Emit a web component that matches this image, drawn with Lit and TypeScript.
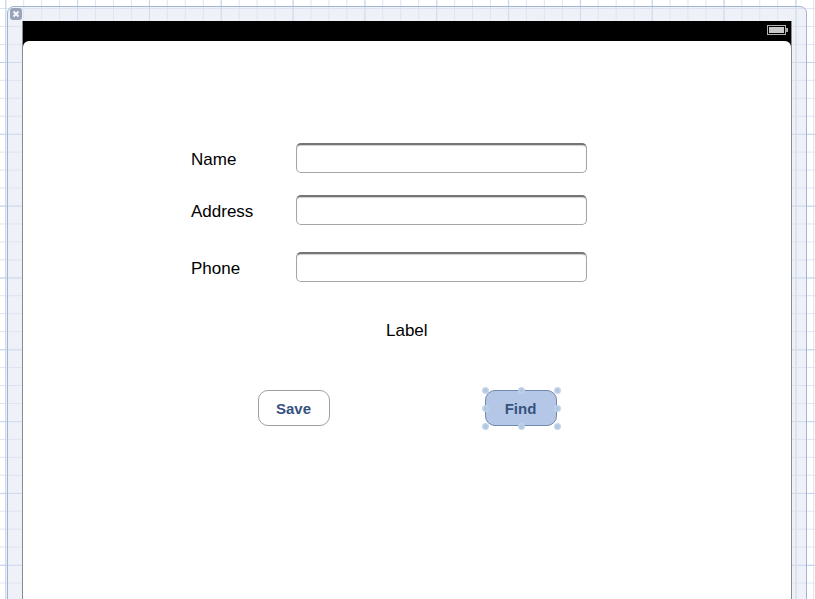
import { LitElement, html, css } from "lit";
import { customElement } from "lit/decorators.js";

@customElement("app-root")
export class AppRoot extends LitElement {
  static styles = css`
    :host {
      display: block;
      width: 815px;
      height: 599px;
      overflow: hidden;
      font-family: "Liberation Sans", Arial, sans-serif;
      background-color: #fff;
      background-image:
        linear-gradient(#c6d4ea 1px, transparent 1px),
        linear-gradient(90deg, #c6d4ea 1px, transparent 1px),
        linear-gradient(#dde5f2 1px, transparent 1px),
        linear-gradient(90deg, #dde5f2 1px, transparent 1px);
      background-size: 71.85px 71.85px, 71.85px 71.85px, 17.96px 17.96px, 17.96px 17.96px;
      background-position: 0 62px, 5.25px 0, 0 8px, 5.25px 0;
    }
    .frame {
      position: relative;
      box-sizing: border-box;
      width: 800px;
      height: 640px;
      margin: 6px 0 0 7px;
      padding: 14px 14px 0 14px;
      border: 1px solid #a3b3d3;
      border-radius: 7px;
      background: rgba(222, 228, 240, 0.5);
    }
    .close {
      position: absolute;
      left: 2px;
      top: 1px;
      box-sizing: border-box;
      width: 12px;
      height: 12px;
      border-radius: 3px;
      background: #99a4ba;
      display: flex;
    }
    .device {
      box-sizing: border-box;
      height: 640px;
      border: 1px solid #8c8c8c;
      border-top: 0;
      background: #000;
    }
    .status {
      height: 20px;
      display: flex;
      justify-content: flex-end;
      align-items: center;
      padding-right: 3px;
    }
    .battery {
      margin-bottom: 2px;
    }
    .screen {
      height: 600px;
      background: #fff;
      border-radius: 6px 6px 0 0;
      box-sizing: border-box;
      padding: 102px 0 0 168px;
    }
    .row {
      display: grid;
      grid-template-columns: 105px 291px;
      align-items: center;
      height: 30px;
    }
    .row + .row {
      margin-top: 22px;
    }
    .row.third {
      margin-top: 27px;
    }
    .name {
      font-size: 17px;
      color: #000;
      padding-top: 4px;
    }
    .input {
      box-sizing: border-box;
      height: 30px;
      border: 1px solid #a6a6a6;
      border-top: 2px solid #757575;
      border-radius: 5px;
      background: #fff;
      box-shadow: inset 0 1px 1px #d0d0d0;
    }
    .label {
      font-size: 17px;
      color: #000;
      margin: 39px 0 0 195px;
      line-height: 20px;
    }
    .buttons {
      display: flex;
      gap: 155px;
      margin: 49px 0 0 67px;
    }
    .btn {
      position: relative;
      box-sizing: border-box;
      width: 72px;
      height: 36px;
      border-radius: 10px;
      border: 1px solid #a0a0a0;
      background: #fff;
      color: #35537f;
      font: bold 15px "Liberation Sans", Arial, sans-serif;
      display: flex;
      align-items: center;
      justify-content: center;
      padding: 0 1px 0 0;
    }
    .btn.sel {
      background: #b5c7e6;
      border-color: #7388ad;
    }
    .h {
      position: absolute;
      width: 7px;
      height: 7px;
      border-radius: 50%;
      background: radial-gradient(circle, #a9c1df 0%, #bfd2e8 55%, rgba(205, 220, 238, 0.6) 100%);
    }
  `;

  render() {
    const handles = [
      [-4, -4], [32, -4], [68, -4],
      [-4, 14], [68, 14],
      [-4, 32], [32, 32], [68, 32],
    ];
    return html`
      <div class="frame">
        <div class="close">
          <svg width="12" height="12" viewBox="0 0 12 12">
            <path d="M3.5 3.5l5 5M8.5 3.5l-5 5" stroke="#f4f6fa" stroke-width="2" fill="none" />
          </svg>
        </div>
        <div class="device">
          <div class="status">
            <svg class="battery" width="21" height="10" viewBox="0 0 21 10">
              <rect x="0.5" y="0.5" width="18" height="9" fill="#000" stroke="#b0b0b0" />
              <rect x="2" y="2" width="15" height="6" fill="#c8c8c8" />
              <rect x="19" y="3" width="2" height="4" fill="#a8a8a8" />
            </svg>
          </div>
          <div class="screen">
            <div class="row"><span class="name">Name</span><div class="input"></div></div>
            <div class="row"><span class="name">Address</span><div class="input"></div></div>
            <div class="row third"><span class="name">Phone</span><div class="input"></div></div>
            <div class="label">Label</div>
            <div class="buttons">
              <button class="btn">Save</button>
              <button class="btn sel">
                Find
                ${handles.map(
                  ([x, y]) => html`<span class="h" style="left:${x}px;top:${y}px"></span>`
                )}
              </button>
            </div>
          </div>
        </div>
      </div>
    `;
  }
}
